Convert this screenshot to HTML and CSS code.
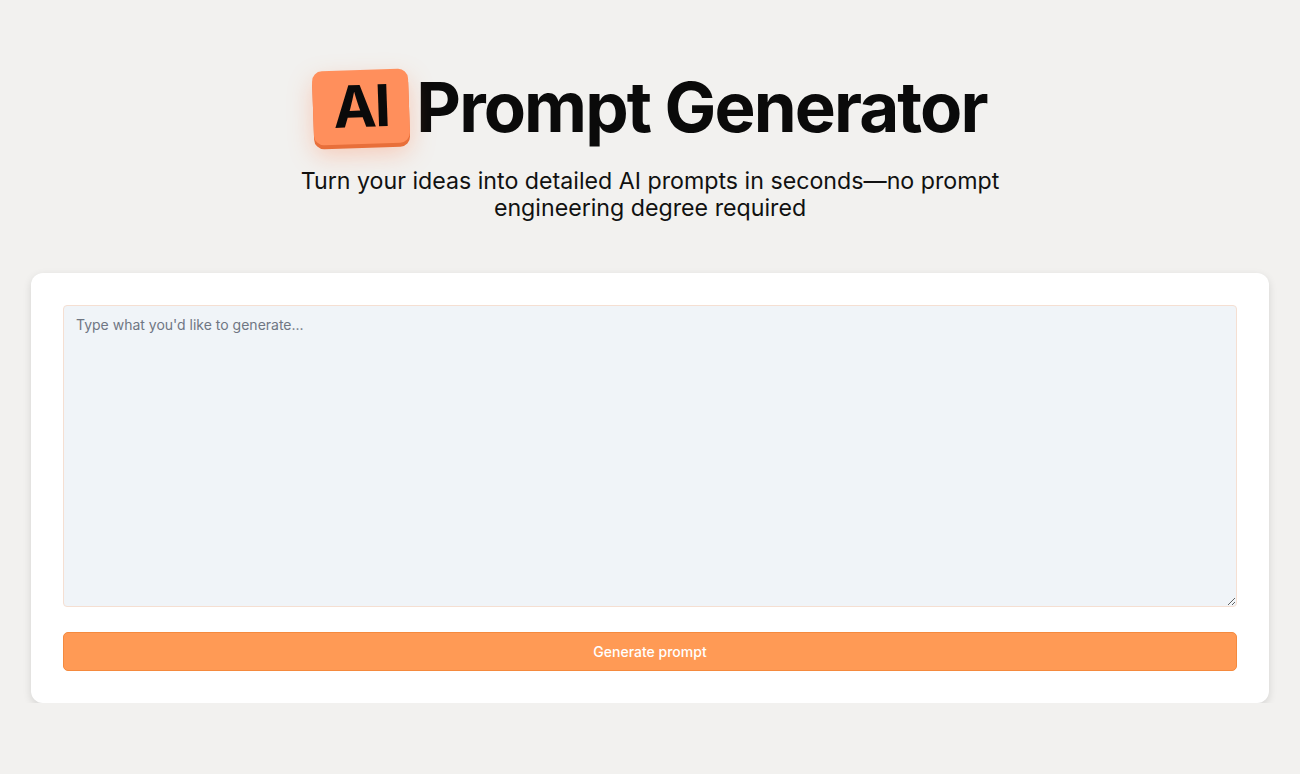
FILE: index.html
```html
<!DOCTYPE html>
<html lang="en">
<head>
<meta charset="utf-8">
<title>AI Prompt Generator</title>
<link rel="stylesheet" href="styles.css">
</head>
<body>
<main class="page">
  <header class="hero">
    <h1 class="title"><span class="badge">AI</span><span class="title-text">Prompt Generator</span></h1>
    <p class="subtitle">Turn your ideas into detailed AI prompts in seconds—no prompt<br>engineering degree required</p>
  </header>
  <section class="card">
    <textarea class="prompt-input" placeholder="Type what you'd like to generate..."></textarea>
    <button class="generate-btn" type="button">Generate prompt</button>
  </section>
</main>
</body>
</html>
```

FILE: styles.css
```css
* { box-sizing: border-box; }
html, body { margin: 0; padding: 0; }
body {
  background: #f2f1ef;
  font-family: Inter, "Liberation Sans", sans-serif;
  color: #111;
}
.page {
  padding: 66px 31px 0;
}
.hero {
  display: flex;
  flex-direction: column;
  align-items: center;
}
.title {
  margin: 0;
  display: flex;
  align-items: center;
  gap: 7px;
  font-family: Inter, "Liberation Sans", sans-serif;
  font-weight: 700;
  font-size: 69px;
  line-height: 82px;
  letter-spacing: -1.9px;
  color: #0a0a0a;
}
.badge {
  display: inline-flex;
  align-items: center;
  justify-content: center;
  width: 96px;
  height: 74px;
  background: #ff8f5c;
  border-radius: 10px;
  transform: rotate(-2deg);
  box-shadow: 0 4px 0 #e86f3a, 0 10px 24px rgba(255, 130, 80, 0.35);
  font-size: 58px;
  letter-spacing: -2px;
  padding-bottom: 2px;
}
.subtitle {
  margin: 20px 0 0;
  text-align: center;
  font-size: 23.2px;
  line-height: 27px;
  font-weight: 400;
  color: #111;
  letter-spacing: 0;
}
.card {
  margin-top: 51px;
  background: #fff;
  border-radius: 12px;
  padding: 32px 32px 32px;
  box-shadow: 0 3px 8px rgba(0, 0, 0, 0.12);
  display: flex;
  flex-direction: column;
  gap: 25px;
}
.prompt-input {
  display: block;
  width: 100%;
  height: 302px;
  background: #f0f4f8;
  border: 1px solid #f5dfd2;
  border-radius: 4px;
  padding: 10px 12px;
  font-family: Inter, "Liberation Sans", sans-serif;
  font-size: 14px;
  color: #333;
  resize: vertical;
  outline: none;
}
.prompt-input::placeholder { color: #6f7683; }
.generate-btn {
  height: 39px;
  background: #ff9a55;
  border: 1px solid #f58a3e;
  border-radius: 5px;
  color: #fff;
  font-family: Inter, "Liberation Sans", sans-serif;
  font-size: 14px;
  font-weight: 500;
  cursor: pointer;
}
```
